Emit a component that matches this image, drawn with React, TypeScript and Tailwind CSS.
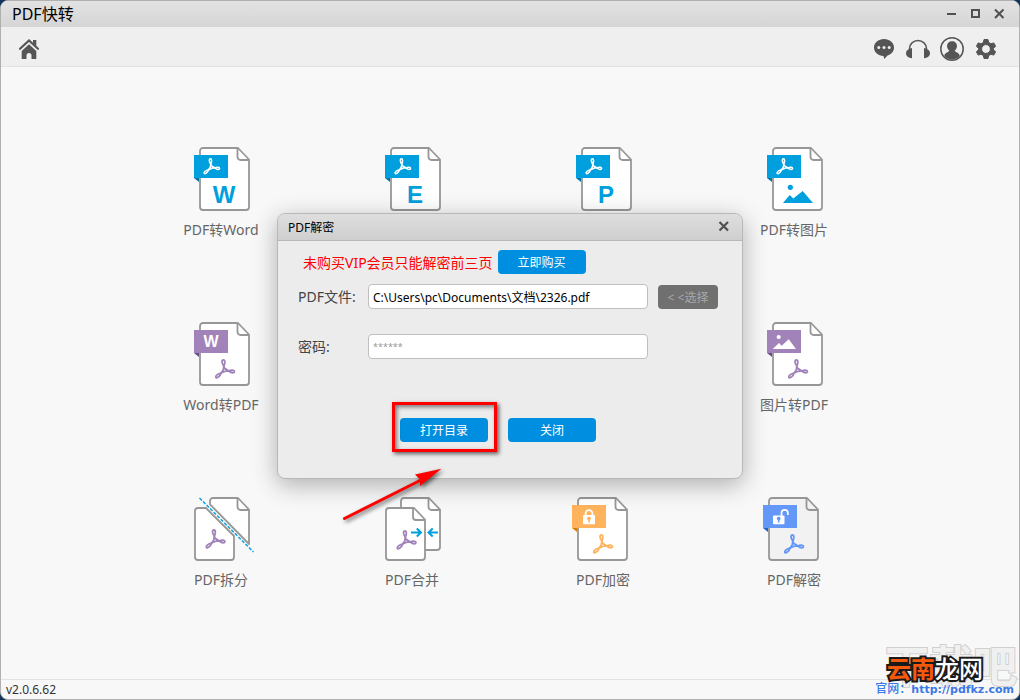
import type { ReactNode } from "react";
import clsx from "clsx";

type Tone = { main: string; dark: string };

const CYAN: Tone = { main: "#009fdd", dark: "#0076a5" };
const PURPLE: Tone = { main: "#a283b9", dark: "#6b4d85" };
const ORANGE: Tone = { main: "#ffb35c", dark: "#d98200" };
const BLUE: Tone = { main: "#6397f8", dark: "#1f62cc" };

const Acrobat = ({ x, y, scale = 1, color }: { x: number; y: number; scale?: number; color: string }) => (
  <g
    transform={`translate(${x} ${y}) scale(${scale})`}
    fill="none"
    stroke={color}
    strokeWidth="1.5"
    strokeLinejoin="round"
  >
    <path d="M7.8 6C5.8 3.8 5.9 .8 7.4 .8S9 3.600 7.8 6Z" />
    <path d="M12 10C14 8.900 16.600 9.200 16.600 10.500S14.200 11.900 12 10Z" />
    <path d="M5.500 11.700C2.700 12.200 .6 14.200 1.100 15.300S4.700 14.800 5.500 11.700Z" />
    <path d="M7.8 6L8.200 7.600L12 10L9.500 10L5.500 11.700L7.300 9.200Z" />
  </g>
);

const Drawing = ({ children }: { children: ReactNode }) => (
  <svg viewBox="0 0 66 66" className="size-[66px] overflow-visible" aria-hidden="true">
    {children}
  </svg>
);

const Page = ({ tone, fill = "#fff", children }: { tone: Tone; fill?: string; children: ReactNode }) => (
  <>
    <g stroke="#979797" strokeWidth="1.8" strokeLinejoin="round">
      <path d="M15 2H50L61 13.5V61a3 3 0 0 1-3 3H15a3 3 0 0 1-3-3V5a3 3 0 0 1 3-3Z" fill={fill} />
      <path d="M49.5 2V11a3 3 0 0 0 3 3H61" fill="none" />
    </g>
    <path d="M6 32H11V36Z" fill={tone.dark} />
    <path d="M6 9H40V32H6Z" fill={tone.main} />
    {children}
  </>
);

const FromPdf = ({ letter }: { letter?: string }) => (
  <Drawing>
    <Page tone={CYAN}>
      <Acrobat x={15} y={12} color="#fff" />
      {letter ? (
        <text
          x="36"
          y="57"
          textAnchor="middle"
          fill={CYAN.main}
          className="font-['Liberation_Sans'] text-[24px] font-bold"
        >
          {letter}
        </text>
      ) : (
        <g fill={CYAN.main}>
          <circle cx="29.3" cy="41.3" r="2.6" />
          <path d="M22 57L28.7 49L32.3 52.5L41.7 45L52 57Z" />
        </g>
      )}
    </Page>
  </Drawing>
);

const ToPdf = ({ letter }: { letter?: string }) => (
  <Drawing>
    <Page tone={PURPLE}>
      {letter ? (
        <text
          x="23"
          y="26"
          textAnchor="middle"
          fill="#fff"
          className="font-['Liberation_Sans'] text-[16px] font-bold"
        >
          {letter}
        </text>
      ) : (
        <g fill="#fff">
          <circle cx="17.7" cy="16" r="2.1" />
          <path d="M11.7 28L18 22L20.7 24.7L27.7 18.3L35 28Z" />
        </g>
      )}
      <Acrobat x={26.5} y={38} scale={1.2} color={PURPLE.main} />
    </Page>
  </Drawing>
);

const SplitIcon = () => (
  <Drawing>
    <g fill="#fff" stroke="#979797" strokeWidth="1.8" strokeLinejoin="round">
      <path d="M22 8.3V5a3 3 0 0 1 3-3H50L61 13.5V48Z" />
      <path d="M49.5 2V11a3 3 0 0 0 3 3H61" fill="none" />
      <path d="M18 12H10a3 3 0 0 0-3 3V61a3 3 0 0 0 3 3H43a3 3 0 0 0 3-3V40Z" />
    </g>
    <path d="M11.5 2L65.5 56" stroke={CYAN.main} strokeWidth="1.4" strokeDasharray="3.4 1.6" />
    <Acrobat x={17} y={33} scale={1.2} color={PURPLE.main} />
  </Drawing>
);

const MergeIcon = () => (
  <Drawing>
    <g fill="#fff" stroke="#979797" strokeWidth="1.8" strokeLinejoin="round">
      <path d="M22 12V5a3 3 0 0 1 3-3H50L61 13.5V51a3 3 0 0 1-3 3H46Z" />
      <path d="M49.5 2V11a3 3 0 0 0 3 3H61" fill="none" />
      <path d="M10 12H35L46 23.5V61a3 3 0 0 1-3 3H10a3 3 0 0 1-3-3V15a3 3 0 0 1 3-3Z" />
      <path d="M34 12V21a3 3 0 0 0 3 3H46" fill="none" />
    </g>
    <Acrobat x={17} y={34} scale={1.2} color={PURPLE.main} />
    <path
      d="M32 36.5H42M37.8 32.5L42 36.5L37.8 40.5M59 36.5H49.5M53.7 32.5L49.5 36.5L53.7 40.5"
      fill="none"
      stroke={CYAN.main}
      strokeWidth="2"
    />
  </Drawing>
);

const LockIcon = ({ open }: { open?: boolean }) => {
  const tone = open ? BLUE : ORANGE;
  return (
    <Drawing>
      <g transform="translate(-4 0)">
        <Page tone={tone} fill={open ? "#f2f2f2" : "#fff"}>
          {open ? (
            <>
              <path d="M24.5 20V17a3.2 3.2 0 0 1 6.4 0V19" fill="none" stroke="#fff" strokeWidth="1.7" />
              <rect x="16" y="19.5" width="11.5" height="8.7" rx="1" fill="#fff" />
            </>
          ) : (
            <>
              <path d="M19.6 20V17.5a3.4 3.4 0 0 1 6.8 0V20" fill="none" stroke="#fff" strokeWidth="1.8" />
              <rect x="17" y="19" width="12" height="9.2" rx="1" fill="#fff" />
            </>
          )}
          <path
            d="M21.1 22.6a1.9 1.9 0 1 1 2.7 1.7V26.5H22.200V24.3A1.9 1.9 0 0 1 21.1 22.6Z"
            transform={open ? "translate(-1.3 0)" : undefined}
            fill={tone.main}
          />
          <Acrobat x={26.5} y={38} scale={1.2} color={tone.main} />
        </Page>
      </g>
    </Drawing>
  );
};

const tools = [
  { label: "PDF转Word", icon: <FromPdf letter="W" /> },
  { label: "PDF转Excel", icon: <FromPdf letter="E" /> },
  { label: "PDF转PPT", icon: <FromPdf letter="P" /> },
  { label: "PDF转图片", icon: <FromPdf /> },
  { label: "Word转PDF", icon: <ToPdf letter="W" /> },
  { label: "Excel转PDF", icon: <ToPdf letter="E" /> },
  { label: "PPT转PDF", icon: <ToPdf letter="P" /> },
  { label: "图片转PDF", icon: <ToPdf /> },
  { label: "PDF拆分", icon: <SplitIcon /> },
  { label: "PDF合并", icon: <MergeIcon /> },
  { label: "PDF加密", icon: <LockIcon /> },
  { label: "PDF解密", icon: <LockIcon open /> },
];

const IconButton = ({ label, className, children }: { label: string; className?: string; children: ReactNode }) => (
  <button type="button" aria-label={label} className={clsx("flex items-center justify-center", className)}>
    {children}
  </button>
);

const TitleBar = () => (
  <header className="flex h-[26px] items-center justify-between bg-linear-to-b from-[#e2e2e2] to-[#d5d5d5] pr-3 pl-[11px]">
    <h1 className="text-base leading-6 text-black">PDF快转</h1>
    <div className="flex gap-2 text-[#505050]">
      <IconButton label="最小化" className="size-4">
        <svg viewBox="0 0 16 16" className="size-4" fill="none" stroke="currentColor" strokeWidth="2">
          <path d="M4 8H13" />
        </svg>
      </IconButton>
      <IconButton label="最大化" className="size-4">
        <svg viewBox="0 0 16 16" className="size-4" fill="none" stroke="currentColor" strokeWidth="2">
          <path d="M5 4H12V11H5Z" />
        </svg>
      </IconButton>
      <IconButton label="关闭窗口" className="size-4">
        <svg viewBox="0 0 16 16" className="size-4" fill="none" stroke="currentColor" strokeWidth="2">
          <path d="M4 3.5L12.500 12M12.500 3.500L4 12" />
        </svg>
      </IconButton>
    </div>
  </header>
);

const Toolbar = () => (
  <nav className="flex h-10 items-center justify-between border-b border-[#e2e2e2] bg-[#efefef] px-4 pt-1 pr-[21px] text-[#555]">
    <IconButton label="首页" className="size-6">
      <svg viewBox="0 0 24 24" className="size-6" fill="currentColor">
        <path d="M12 7.2L19.3 14V22H14.5V18.5a2.5 2.5 0 0 0-5 0V22H4.7V14Z" />
        <path
          d="M3 11.8L12 3.500L21 11.8"
          fill="none"
          stroke="currentColor"
          strokeWidth="2.2"
          strokeLinecap="round"
        />
        <path d="M16 3H19.300V9L16 6Z" />
      </svg>
    </IconButton>
    <div className="flex gap-[10px]">
      <IconButton label="消息" className="size-6">
        <svg viewBox="0 0 24 24" className="size-6" fill="currentColor">
          <path d="M12 2C6.3 2 2 5.6 2 10.5S6.3 19 11.5 19L12.300 22L15.5 18.5C19.4 17.3 22 14.3 22 10.5C22 5.6 17.7 2 12 2Z" />
          <g fill="#efefef">
            <circle cx="6.8" cy="10.5" r="1.5" />
            <circle cx="12" cy="10.5" r="1.5" />
            <circle cx="17.2" cy="10.5" r="1.5" />
          </g>
        </svg>
      </IconButton>
      <IconButton label="客服" className="size-6">
        <svg viewBox="0 0 24 24" className="size-6" fill="currentColor">
          <path d="M3.5 13.5V11.5a8.5 8 0 0 1 17 0V13.5" fill="none" stroke="currentColor" strokeWidth="1.5" />
          <path d="M6 11V21.2C2.5 21 0 19 0 16.3C0 14 1.5 12.8 3 12.3C3.8 12 4.5 11 6 11Z" />
          <path d="M18 11V21.2C21.5 21 24 19 24 16.3C24 14 22.5 12.8 21 12.3C20.2 12 19.5 11 18 11Z" />
        </svg>
      </IconButton>
      <IconButton label="账户" className="size-6">
        <svg viewBox="0 0 24 24" className="size-6" fill="currentColor">
          <circle cx="12" cy="12" r="11.2" fill="none" stroke="currentColor" strokeWidth="1.500" />
          <path d="M12 4.2C8.8 4.2 7 6.3 7 9C7 10.8 7.9 12.6 9.3 13.6C9.3 15.200 4.8 15.3 4.200 19A10.500 10.500 0 0 0 19.8 19C19.200 15.3 14.7 15.2 14.7 13.6C16.1 12.6 17 10.8 17 9C17 6.3 15.2 4.2 12 4.2Z" />
        </svg>
      </IconButton>
      <IconButton label="设置" className="size-6">
        <svg viewBox="0 0 24 24" className="size-6" fill="currentColor" stroke="currentColor" strokeLinejoin="round">
          <path
            fillRule="evenodd"
            d="M10 2.500H14L14.700 5.500L17 6.800L19.800 5.900L21.600 9.300L19.500 11.300V12.800L21.600 14.800L19.800 18.100L17 17.300L14.700 18.500L14 21.500H10L9.300 18.500L7 17.300L4.200 18.100L2.400 14.800L4.500 12.800V11.300L2.400 9.300L4.200 5.900L7 6.800L9.300 5.500ZM12 7.600a4.400 4.400 0 1 0 0 8.800a4.400 4.400 0 0 0 0-8.800Z"
          />
        </svg>
      </IconButton>
    </div>
  </nav>
);

const ActionButton = ({ children }: { children: ReactNode }) => (
  <button type="button" className="h-6 w-[88px] rounded bg-[#008fe0] pt-0.5 text-xs text-white">
    {children}
  </button>
);

const DecryptDialog = () => (
  <div
    role="dialog"
    aria-labelledby="decrypt-title"
    className="relative flex h-[266px] w-[466px] flex-col rounded-lg border border-[#b8b8b8] bg-[#ececec] shadow-[0_6px_24px_rgba(0,0,0,0.3)]"
  >
    <div className="flex h-[27px] items-center justify-between rounded-t-lg border-b border-[#b8b8b8] bg-linear-to-b from-[#dedede] to-[#cfcfcf] pr-[10px] pl-[10px]">
      <h2 id="decrypt-title" className="pt-0.5 text-xs text-black">
        PDF解密
      </h2>
      <IconButton label="关闭对话框" className="size-4">
        <svg viewBox="0 0 16 16" className="size-4" fill="none" stroke="#505050" strokeWidth="2.2">
          <path d="M3.5 3L12 11.500M12 3L3.5 11.500" />
        </svg>
      </IconButton>
    </div>
    <div className="flex flex-1 flex-col px-5 pt-[9px] text-sm text-[#444]">
      <div className="flex h-6 items-center gap-[5px] pl-[5px]">
        <p className="pt-0.5 text-[#ff0000]">未购买VIP会员只能解密前三页</p>
        <ActionButton>立即购买</ActionButton>
      </div>
      <div className="mt-[10px] flex h-[25px] items-center">
        <label htmlFor="pdf-file" className="w-[70px]">
          PDF文件:
        </label>
        <input
          id="pdf-file"
          type="text"
          defaultValue="C:\Users\pc\Documents\文档\2326.pdf"
          className="h-[25px] w-[280px] rounded border border-[#bfbfbf] bg-white px-1 text-xs text-black"
        />
        <button
          type="button"
          disabled
          className="ml-[10px] h-6 w-[60px] rounded bg-[#707070] pt-0.5 text-xs text-[#a8a8a8]"
        >
          {"< <选择"}
        </button>
      </div>
      <div className="mt-[25px] flex h-[25px] items-center">
        <label htmlFor="pdf-password" className="w-[70px]">
          密码:
        </label>
        <input
          id="pdf-password"
          type="password"
          placeholder="******"
          className="h-[25px] w-[280px] rounded border border-[#bfbfbf] bg-white px-1 text-[9px] text-black placeholder:text-[#999]"
        />
      </div>
      <div className="mt-[59px] flex justify-center gap-5 pr-6">
        <div className="relative">
          <ActionButton>打开目录</ActionButton>
          <div className="pointer-events-none absolute -top-4 -right-[9px] -bottom-[10px] -left-2 border-3 border-[#ff0000] shadow-[2px_2px_4px_rgba(0,0,0,0.6),inset_2px_2px_4px_rgba(0,0,0,0.5)]" />
          <svg
            viewBox="0 0 100 54"
            className="pointer-events-none absolute top-[50px] -left-[57px] h-[54px] w-[100px] overflow-visible drop-shadow-[2px_2px_2px_rgba(0,0,0,0.6)]"
            aria-hidden="true"
          >
            <path d="M1.5 50.5L78 12" stroke="#ff0000" strokeWidth="3" strokeLinecap="round" />
            <path d="M98.5 .8L72 6.500L77 11.500L77 18Z" fill="#ff0000" />
          </svg>
        </div>
        <ActionButton>关闭</ActionButton>
      </div>
    </div>
  </div>
);

const Watermark = () => (
  <div className="absolute right-0 bottom-0 flex flex-col items-end leading-none">
    <div
      aria-hidden="true"
      className="absolute right-0.5 bottom-2 text-[44px] leading-[50px] font-bold whitespace-nowrap text-[#f0f0f0] [-webkit-text-stroke:2px_#d0d0d0] [paint-order:stroke_fill]"
    >
      下载吧
    </div>
    <div className="relative mr-9 text-[24px] leading-6 font-bold text-white [-webkit-text-stroke:4px_#1a1a1a] [paint-order:stroke_fill]">
      <span className="text-[#f55a0c]">云南</span>
      <span className="font-medium">龙网</span>
    </div>
    <a
      href="http://pdfkz.com"
      className="relative pr-[5px] font-['DejaVu_Sans','Noto_Sans_CJK_SC',sans-serif] text-[11px] leading-[18px] font-bold whitespace-nowrap text-[#3b78e7]"
    >
      <span className="text-xs font-medium">官网：</span>http://pdfkz.com
    </a>
  </div>
);

export default function App() {
  return (
    <div className="min-h-screen bg-[#12335c] font-['Noto_Sans','Noto_Sans_CJK_SC',sans-serif]">
      <div className="relative flex min-h-screen flex-col overflow-hidden rounded-lg border border-[#b0b0b0] bg-[#f8f8f8]">
        <TitleBar />
        <Toolbar />
        <main className="grid flex-1 grid-cols-4 content-start gap-x-px gap-y-[81px] pt-[79px] pr-[130px] pb-16 pl-[125px]">
          {tools.map((tool) => (
            <button key={tool.label} type="button" className="flex flex-col items-center gap-2">
              {tool.icon}
              <span className="text-sm leading-5 text-[#666]">{tool.label}</span>
            </button>
          ))}
        </main>
        <footer className="flex h-5 items-center border-t border-[#e2e2e2] px-[5px] text-xs text-[#333]">
          v2.0.6.62
        </footer>
        <Watermark />
        <div className="absolute inset-0 flex items-center justify-center pb-2">
          <DecryptDialog />
        </div>
      </div>
    </div>
  );
}
